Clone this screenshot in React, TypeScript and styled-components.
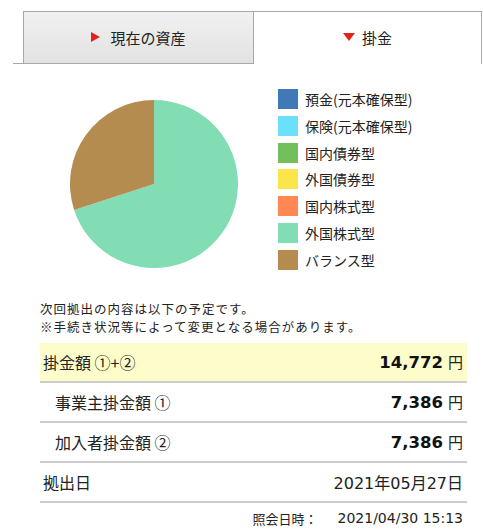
import styled, { createGlobalStyle } from 'styled-components';

const GlobalStyle = createGlobalStyle({
  'html, body': {
    margin: 0,
    padding: 0,
    background: '#fff',
  },
  body: {
    fontFamily: '"Noto Sans CJK JP", "DejaVu Sans", sans-serif',
    color: '#222',
  },
});

const JA = '"Noto Sans CJK JP", sans-serif';
const NUM = '"DejaVu Sans", "Noto Sans CJK JP", sans-serif';

const Page = styled.div({
  width: 483,
  height: 532,
  overflow: 'hidden',
  paddingTop: 11,
  boxSizing: 'border-box',
});

const Tabs = styled.div({
  display: 'flex',
  margin: '0 1px 0 13px',
  height: 53,
});

const TabGap = styled.div({
  width: 10,
  borderBottom: '1px solid #a8a8a8',
});

const Tab = styled.div<{ $active?: boolean }>(({ $active }) => ({
  flex: $active ? 1 : '0 0 231px',
  boxSizing: 'border-box',
  display: 'flex',
  alignItems: 'center',
  justifyContent: 'center',
  gap: $active ? 7 : 10,
  fontFamily: JA,
  fontSize: 15,
  color: '#222',
  borderTop: '1px solid #a8a8a8',
  borderRight: '1px solid #a8a8a8',
  borderLeft: $active ? 'none' : '1px solid #a8a8a8',
  borderBottom: $active ? 'none' : '1px solid #a8a8a8',
  background: $active ? '#fff' : 'linear-gradient(#f1f1f1, #e2e2e2)',
  paddingBottom: $active ? 2 : 1,
}));

const ArrowRight = styled.span({
  width: 0,
  height: 0,
  borderLeft: '9px solid #e3231b',
  borderTop: '5px solid transparent',
  borderBottom: '5px solid transparent',
});

const ArrowDown = styled.span({
  width: 0,
  height: 0,
  borderTop: '8px solid #e3231b',
  borderLeft: '6px solid transparent',
  borderRight: '6px solid transparent',
});

const Content = styled.div({
  margin: '0 16px 0 40px',
});

const ChartArea = styled.div({
  display: 'flex',
  alignItems: 'flex-start',
  paddingTop: 25,
});

const Pie = styled.svg({
  marginLeft: 30,
  marginTop: 11,
  flexShrink: 0,
});

const Legend = styled.ul({
  listStyle: 'none',
  margin: '0 0 0 40px',
  padding: 0,
  display: 'flex',
  flexDirection: 'column',
  gap: 6.8,
});

const LegendItem = styled.li({
  display: 'flex',
  alignItems: 'center',
  gap: 7,
  height: 20,
  fontFamily: JA,
  fontSize: 14,
  color: '#222',
});

const Swatch = styled.span<{ $color: string }>(({ $color }) => ({
  width: 20,
  height: 20,
  background: $color,
  flexShrink: 0,
}));

const Notes = styled.p({
  margin: '30px 0 7px',
  fontFamily: JA,
  fontSize: 12.5,
  letterSpacing: 1,
  lineHeight: '18px',
  color: '#222',
});

const Row = styled.div<{ $highlight?: boolean; $indent?: boolean }>(({ $highlight, $indent }) => ({
  display: 'flex',
  alignItems: 'center',
  justifyContent: 'space-between',
  height: 38,
  boxSizing: 'content-box',
  padding: `0 4px 0 ${$indent ? 15 : 3}px`,
  borderBottom: '2px solid #cccccc',
  background: $highlight ? '#fdfdcb' : 'transparent',
}));

const Label = styled.span({
  fontFamily: JA,
  fontSize: 16,
  color: '#222',
});

const Amount = styled.span({
  display: 'flex',
  alignItems: 'baseline',
});

const Figure = styled.span({
  fontFamily: NUM,
  fontWeight: 700,
  fontSize: 16.5,
  color: '#111',
});

const Yen = styled.span({
  fontFamily: JA,
  fontSize: 15,
  marginLeft: 5,
  color: '#222',
});

const DateValue = styled.span({
  fontFamily: NUM,
  fontSize: 16,
  color: '#222',
});

const Footer = styled.div({
  display: 'flex',
  justifyContent: 'flex-end',
  alignItems: 'center',
  gap: 20,
  marginTop: 6,
  paddingRight: 4,
  fontSize: 14,
  color: '#222',
});

const FooterLabel = styled.span({
  fontFamily: JA,
  fontSize: 13,
});

const FooterValue = styled.span({
  fontFamily: NUM,
  fontSize: 14,
});

const legend = [
  { label: '預金(元本確保型)', color: '#3f7ab7' },
  { label: '保険(元本確保型)', color: '#6ae0fd' },
  { label: '国内債券型', color: '#71c05c' },
  { label: '外国債券型', color: '#fbe54a' },
  { label: '国内株式型', color: '#fe8753' },
  { label: '外国株式型', color: '#82dcb4' },
  { label: 'バランス型', color: '#b58c50' },
];

const slices = [
  { value: 70, color: '#82dcb4' },
  { value: 30, color: '#b58c50' },
];

function PieChart() {
  const r = 84;
  const c = 84;
  let start = 0;
  const total = slices.reduce((s, x) => s + x.value, 0);
  return (
    <Pie width={168} height={168} viewBox="0 0 168 168">
      {slices.map((s, i) => {
        const a0 = (start / total) * Math.PI * 2;
        start += s.value;
        const a1 = (start / total) * Math.PI * 2;
        const x0 = c + r * Math.sin(a0);
        const y0 = c - r * Math.cos(a0);
        const x1 = c + r * Math.sin(a1);
        const y1 = c - r * Math.cos(a1);
        const large = a1 - a0 > Math.PI ? 1 : 0;
        return (
          <path
            key={i}
            d={`M${c},${c} L${x0},${y0} A${r},${r} 0 ${large} 1 ${x1},${y1} Z`}
            fill={s.color}
          />
        );
      })}
    </Pie>
  );
}

export default function App() {
  return (
    <Page>
      <GlobalStyle />
      <Tabs>
        <TabGap />
        <Tab>
          <ArrowRight />
          現在の資産
        </Tab>
        <Tab $active>
          <ArrowDown />
          掛金
        </Tab>
      </Tabs>
      <Content>
        <ChartArea>
          <PieChart />
          <Legend>
            {legend.map((l) => (
              <LegendItem key={l.label}>
                <Swatch $color={l.color} />
                {l.label}
              </LegendItem>
            ))}
          </Legend>
        </ChartArea>
        <Notes>
          次回拠出の内容は以下の予定です。
          <br />
          ※手続き状況等によって変更となる場合があります。
        </Notes>
        <Row $highlight>
          <Label>掛金額 ①+②</Label>
          <Amount>
            <Figure>14,772</Figure>
            <Yen>円</Yen>
          </Amount>
        </Row>
        <Row $indent>
          <Label>事業主掛金額 ①</Label>
          <Amount>
            <Figure>7,386</Figure>
            <Yen>円</Yen>
          </Amount>
        </Row>
        <Row $indent>
          <Label>加入者掛金額 ②</Label>
          <Amount>
            <Figure>7,386</Figure>
            <Yen>円</Yen>
          </Amount>
        </Row>
        <Row>
          <Label>拠出日</Label>
          <DateValue>2021年05月27日</DateValue>
        </Row>
        <Footer>
          <FooterLabel>照会日時：</FooterLabel>
          <FooterValue>2021/04/30 15:13</FooterValue>
        </Footer>
      </Content>
    </Page>
  );
}
